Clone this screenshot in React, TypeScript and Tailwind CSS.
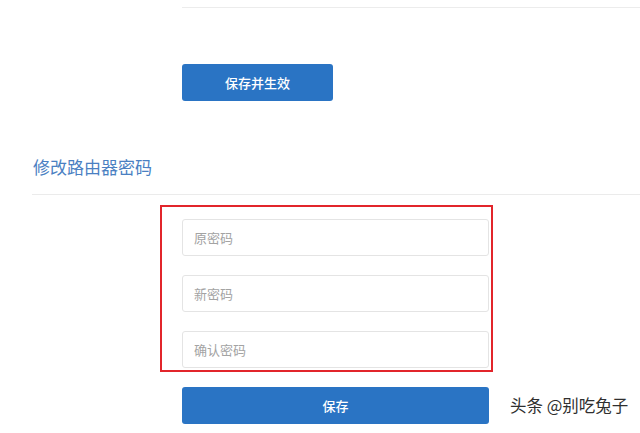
const font = { fontFamily: '"Noto Sans CJK SC", "Noto Sans", sans-serif' };

const fields = ["原密码", "新密码", "确认密码"];

const App = () => {
  return (
    <div className="w-[640px] h-[433px] overflow-hidden bg-white" style={font}>
      <div className="pt-[7px]">
        <div className="ml-[182px] h-px bg-[#ececec]" />
      </div>

      <button className="mt-[56px] ml-[182px] w-[151px] h-[37px] rounded-[3px] bg-[#2a74c4] text-white text-[13px] font-medium flex items-center justify-center">
        保存并生效
      </button>

      <h2 className="mt-[54px] ml-[33px] text-[17px] leading-[24px] text-[#4a80c2]">修改路由器密码</h2>

      <div className="mt-[15px] ml-[32px] h-px bg-[#ebebeb]" />

      <div className="mt-[10px] ml-[160px] w-[333px] h-[167px] border-2 border-[#e2252b] pl-[20px] pt-[12px] flex flex-col gap-[19px]">
        {fields.map(f => (
          <input
            key={f}
            type="password"
            placeholder={f}
            className="w-[307px] h-[37px] shrink-0 rounded-[3px] border border-[#e4e4e4] px-[11px] text-[13px] text-[#555] placeholder:text-[#a3a3a3] outline-none"
            style={font}
          />
        ))}
      </div>

      <div className="mt-[15px] flex items-center">
        <button className="ml-[182px] w-[307px] h-[37px] rounded-[3px] bg-[#2a74c4] text-white text-[13px] font-medium flex items-center justify-center">
          保存
        </button>
        <span className="ml-[21px] text-[16.5px] text-[#2f2f2f]">头条 @别吃兔子</span>
      </div>
    </div>
  );
};

export default App;
